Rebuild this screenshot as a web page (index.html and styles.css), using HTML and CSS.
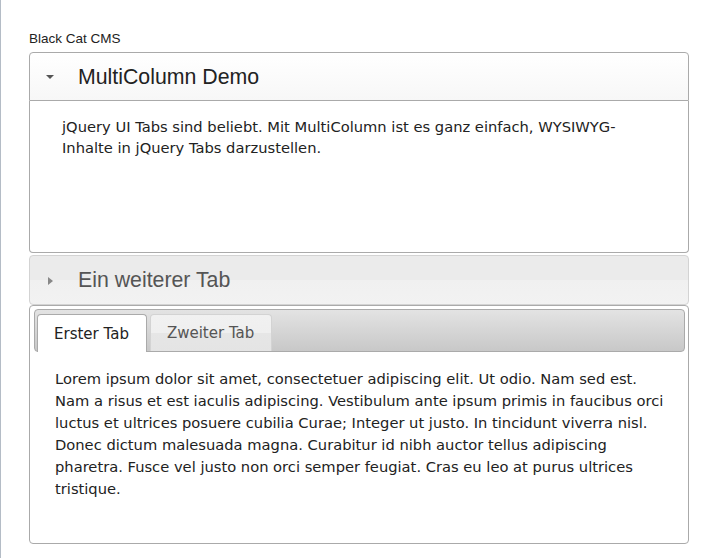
FILE: index.html
```html
<!DOCTYPE html>
<html lang="de">
<head>
  <meta charset="UTF-8">
  <meta name="viewport" content="width=device-width, initial-scale=1.0">
  <link rel="stylesheet" href="styles.css">
  <title>Black Cat CMS</title>
</head>
<body>

<div class="page">
  <div class="site-title">Black Cat CMS</div>

  <div class="accordion">
    <h3 class="acc-head active"><span class="arrow-down"></span>MultiColumn Demo</h3>
    <div class="acc-body first">
      <p>jQuery UI Tabs sind beliebt. Mit MultiColumn ist es ganz einfach, WYSIWYG-Inhalte in jQuery Tabs darzustellen.</p>
    </div>

    <h3 class="acc-head closed"><span class="arrow-right"></span>Ein weiterer Tab</h3>
    <div class="acc-body tabs">
      <ul class="tab-nav">
        <li class="tab selected">Erster Tab</li>
        <li class="tab">Zweiter Tab</li>
      </ul>
      <div class="tab-panel">
        <p>Lorem ipsum dolor sit amet, consectetuer adipiscing elit. Ut odio. Nam sed est. Nam a risus et est iaculis adipiscing. Vestibulum ante ipsum primis in faucibus orci luctus et ultrices posuere cubilia Curae; Integer ut justo. In tincidunt viverra nisl. Donec dictum malesuada magna. Curabitur id nibh auctor tellus adipiscing pharetra. Fusce vel justo non orci semper feugiat. Cras eu leo at purus ultrices tristique.</p>
      </div>
    </div>
  </div>
</div>

</body>
</html>
```
FILE: styles.css
```css
body {
  margin: 0;
  min-height: 100vh;
  background-color: #fff;
  border-left: 1px solid #b4bcc6;
  font-family: "DejaVu Sans", Verdana, sans-serif;
  color: #222;
}

.page {
  width: 660px;
  padding: 31px 0 0 28px;
}

.site-title {
  font-family: "Liberation Sans", Arial, sans-serif;
  font-size: 13.5px;
  line-height: 15px;
  color: #222;
  margin-bottom: 6px;
}

.acc-head {
  display: flex;
  align-items: center;
  margin: 0;
  height: 47px;
  padding-left: 16px;
  font-family: "Liberation Sans", Arial, sans-serif;
  font-size: 21.3px;
  font-weight: normal;
}

.acc-head.active {
  border: 1px solid #aaa;
  border-radius: 4px 4px 0 0;
  background: linear-gradient(#fff, #f7f7f7);
  color: #222;
  padding-top: 1px;
  height: 46px;
}

.acc-head.closed {
  height: 48px;
  margin-top: 2px;
  border: 1px solid #d3d3d3;
  border-radius: 4px;
  background: linear-gradient(#ebebeb 0%, #ebebeb 50%, #f0f0f0 50%, #f2f2f2 100%);
  color: #555;
}

.arrow-down {
  width: 0;
  height: 0;
  border-left: 4px solid transparent;
  border-right: 4px solid transparent;
  border-top: 4px solid #555;
  margin: 0 24px 0 0;
}

.arrow-right {
  width: 0;
  height: 0;
  border-top: 4px solid transparent;
  border-bottom: 4px solid transparent;
  border-left: 5px solid #888;
  margin: 2px 25px 0 2px;
}

.acc-body {
  border: 1px solid #aaa;
  background-color: #fff;
}

.acc-body.first {
  border-top: none;
  border-radius: 0 0 4px 4px;
  padding: 0 50px 0 32px;
  box-sizing: border-box;
  height: 152px;
}

.acc-body p {
  margin: 0;
}

.acc-body.first p {
  padding-top: 15px;
  font-size: 14.7px;
  line-height: 21px;
}

.acc-body.tabs {
  border-radius: 4px;
  height: 239px;
  box-sizing: border-box;
  padding: 3px 3px 3px 4px;
}

.tab-nav {
  display: flex;
  gap: 3px;
  margin: 0;
  padding: 4px 2px 0;
  list-style: none;
  height: 37px;
  border: 1px solid #aaa;
  border-radius: 4px;
  background: linear-gradient(#e3e3e3, #c8c8c8);
}

.tab {
  display: flex;
  align-items: center;
  padding: 0 17px 0 16px;
  height: 36px;
  border: 1px solid #d3d3d3;
  border-bottom: none;
  border-radius: 4px 4px 0 0;
  background: linear-gradient(#f1f1f1 0%, #efefef 50%, #e6e6e6 51%, #e4e4e4 100%);
  color: #555;
  font-size: 15px;
}

.tab.selected {
  border-color: #aaa;
  background: #fff;
  color: #222;
  height: 37px;
  margin-bottom: -1px;
}

.tab-panel {
  padding: 16px 20px 0 21px;
}

.tab-panel p {
  font-size: 14.7px;
  line-height: 22px;
}
```
